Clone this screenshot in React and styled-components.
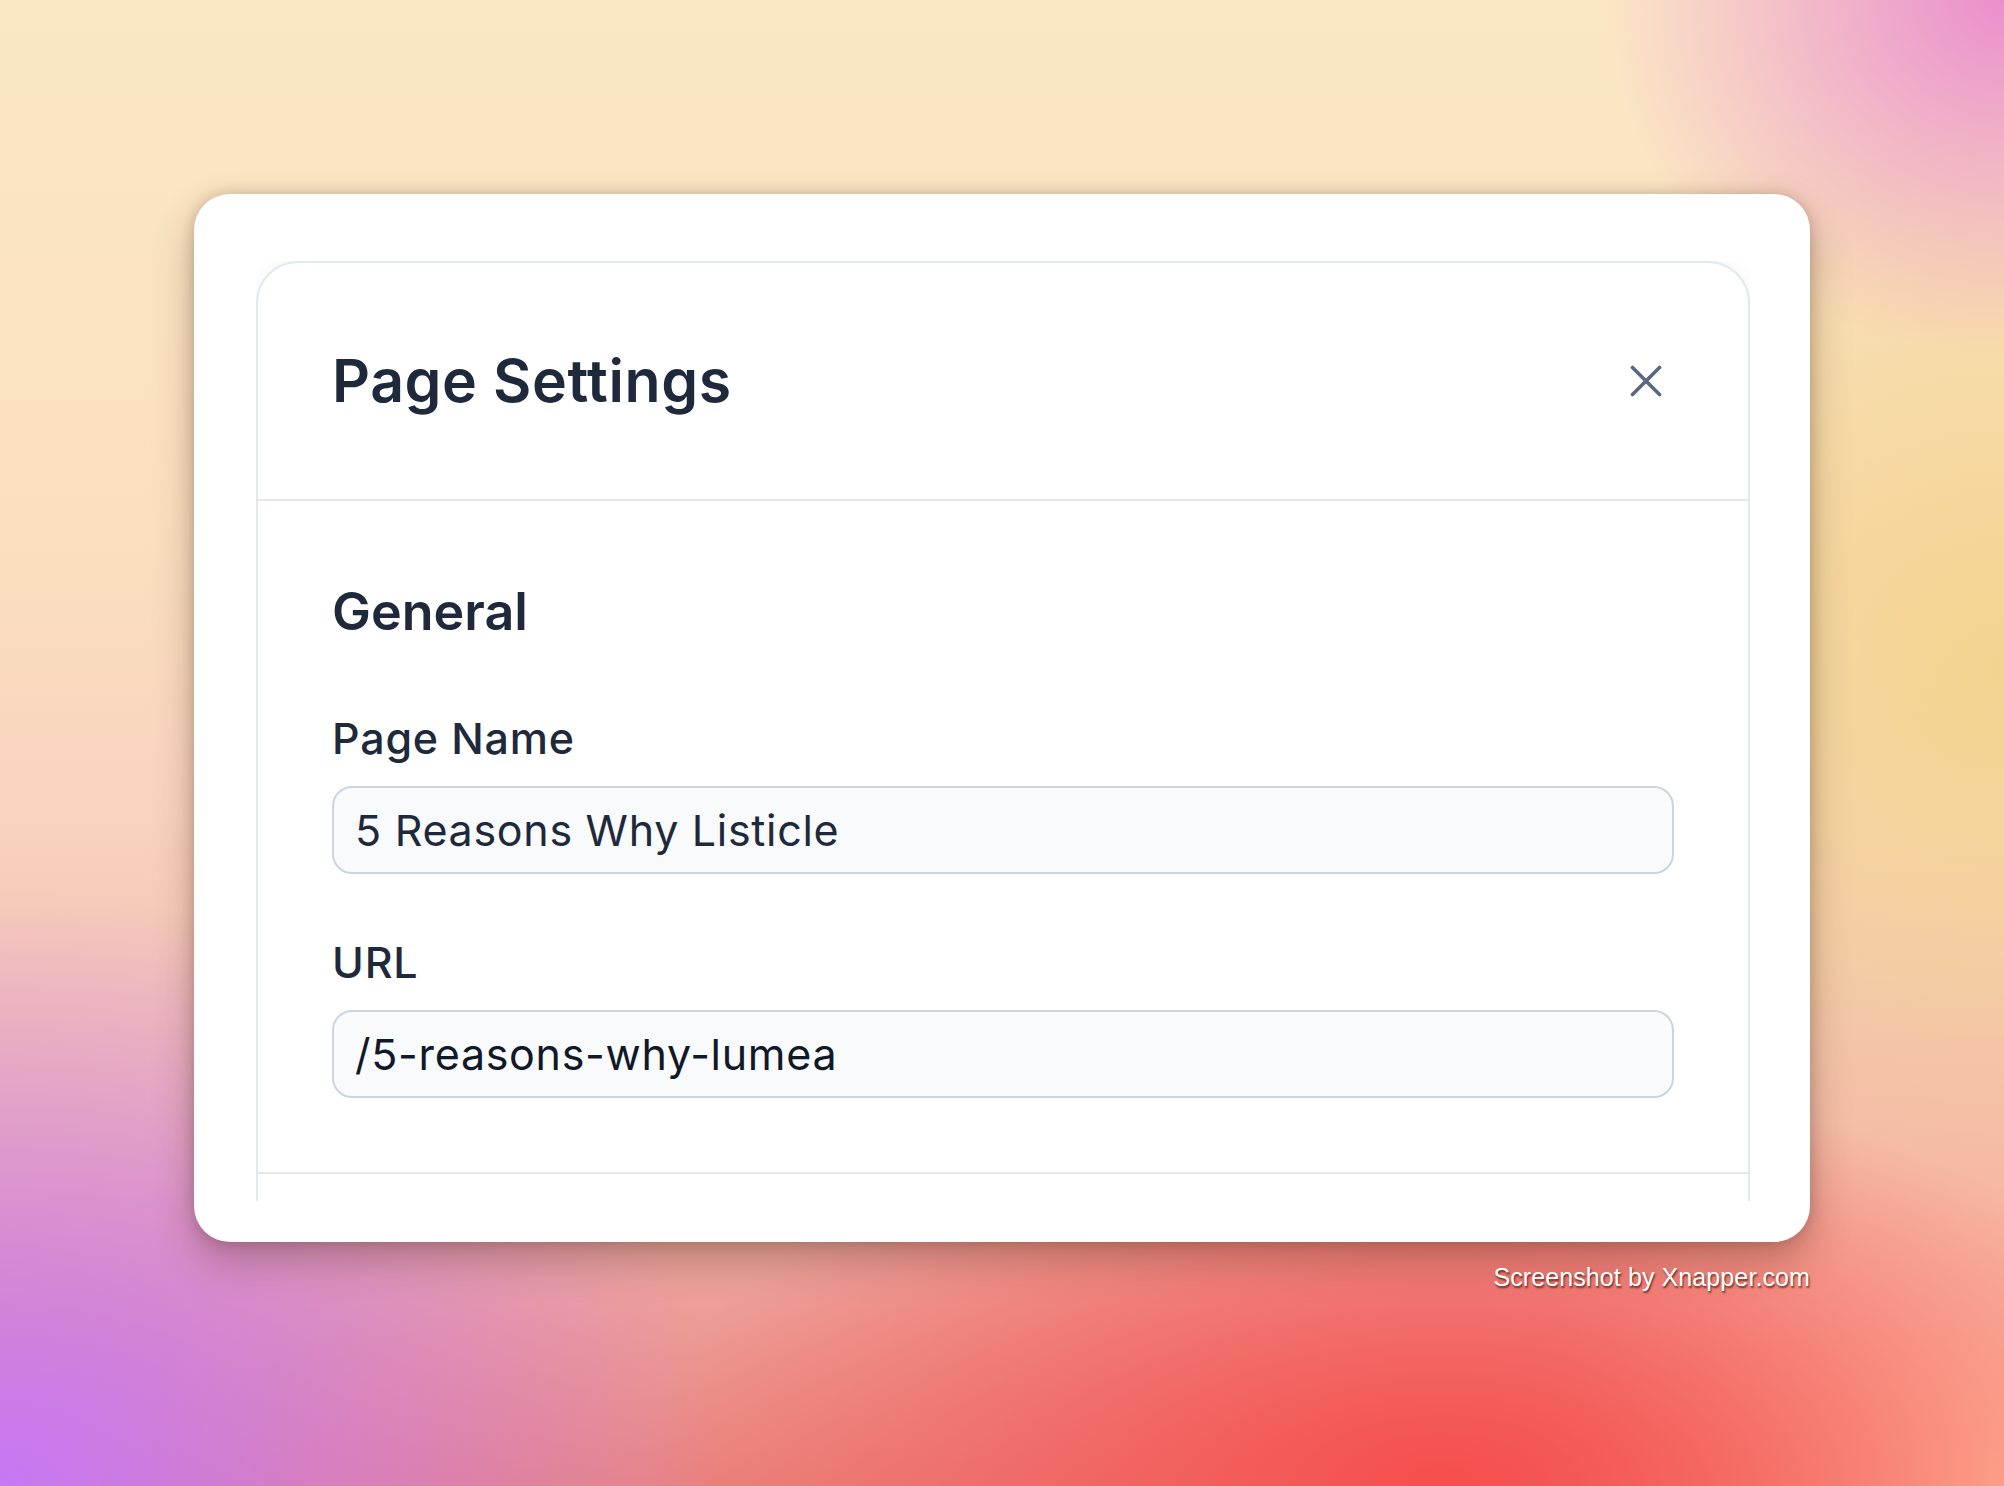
import React from "react";
import styled, { createGlobalStyle } from "styled-components";

const GlobalStyle = createGlobalStyle`
  html, body {
    margin: 0;
    padding: 0;
  }
  body {
    font-family: "Inter", "Noto Sans", sans-serif;
  }
  * {
    box-sizing: border-box;
  }
`;

function CloseIcon() {
  return (
    <svg width="32" height="32" viewBox="0 0 32 32" fill="none">
      <path
        d="M2.5 2.5L29.5 29.5M29.5 2.5L2.5 29.5"
        stroke="#5b6780"
        strokeWidth="3.6"
        strokeLinecap="round"
      />
    </svg>
  );
}

function App() {
  return (
    <>
      <GlobalStyle />
      <Page>
        <Stage>
          <Frame>
            <Viewport>
              <Panel>
                <Header>
                  <Title>Page Settings</Title>
                  <CloseBtn aria-label="Close">
                    <CloseIcon />
                  </CloseBtn>
                </Header>
                <Body>
                  <SectionTitle>General</SectionTitle>
                  <Field>
                    <Label>Page Name</Label>
                    <Input readOnly value="5 Reasons Why Listicle" />
                  </Field>
                  <Field>
                    <Label>URL</Label>
                    <Input readOnly value="/5-reasons-why-lumea" $dark />
                  </Field>
                </Body>
                <Footer />
              </Panel>
            </Viewport>
          </Frame>
          <Watermark>Screenshot by Xnapper.com</Watermark>
        </Stage>
      </Page>
    </>
  );
}

const Page = styled.div`
  width: 2004px;
  height: 1486px;
  overflow: hidden;
  display: flex;
  justify-content: center;
  padding-top: 194px;
  background:
    radial-gradient(ellipse 20% 24% at 100% 0%, rgba(233, 138, 205, 0.95), rgba(233, 138, 205, 0)),
    radial-gradient(ellipse 36% 40% at 0% 100%, rgba(198, 120, 246, 1), rgba(198, 120, 246, 0)),
    radial-gradient(ellipse 40% 28% at 72% 100%, rgba(246, 78, 76, 1), rgba(246, 78, 76, 0)),
    radial-gradient(ellipse 24% 34% at 100% 100%, rgba(255, 192, 162, 1), rgba(255, 192, 162, 0)),
    radial-gradient(ellipse 30% 40% at 100% 45%, rgba(243, 212, 142, 1), rgba(243, 212, 142, 0)),
    linear-gradient(180deg, #fbe7c5 0%, #fbe0c0 35%, #f9d3bf 55%, #f0b3ac 78%, #e9857f 100%);
`;

const Stage = styled.div`
  width: 1616px;
  display: flex;
  flex-direction: column;
  align-items: flex-end;
`;

const Frame = styled.div`
  width: 100%;
  height: 1048px;
  background: #ffffff;
  border-radius: 36px;
  padding: 67px 60px 41px 62px;
  box-shadow: 0 18px 40px rgba(60, 30, 10, 0.3), 0 0 14px rgba(60, 30, 10, 0.2);
`;

const Viewport = styled.div`
  height: 100%;
  overflow: hidden;
`;

const Panel = styled.section`
  border: 2px solid #e2e8f0;
  border-radius: 42px 42px 0 0;
  background: #ffffff;
  box-shadow: 0 0 18px rgba(15, 23, 42, 0.05);
  min-height: 1100px;
`;

const Header = styled.header`
  height: 238px;
  display: flex;
  align-items: center;
  justify-content: space-between;
  padding: 0 74px;
  border-bottom: 2px solid #e2e8f0;
`;

const Title = styled.h1`
  margin: 0;
  font-size: 59px;
  line-height: 1.2;
  font-weight: 600;
  color: #1e293b;
  letter-spacing: 0.6px;
`;

const CloseBtn = styled.button`
  width: 56px;
  height: 56px;
  display: flex;
  align-items: center;
  justify-content: center;
  padding: 0;
  border: none;
  background: transparent;
  cursor: pointer;
`;

const Body = styled.div`
  display: flex;
  flex-direction: column;
  padding: 80px 74px 74px;
  border-bottom: 2px solid #e2e8f0;
`;

const SectionTitle = styled.h2`
  margin: 0 0 70px;
  font-size: 52px;
  line-height: 1.2;
  font-weight: 600;
  color: #1e293b;
`;

const Field = styled.div`
  display: flex;
  flex-direction: column;
  gap: 21px;

  & + & {
    margin-top: 63px;
  }
`;

const Label = styled.label`
  font-size: 43px;
  line-height: 1.2;
  font-weight: 500;
  color: #1e293b;
  letter-spacing: 0.8px;
`;

const Input = styled.input`
  width: 100%;
  height: 88px;
  padding: 0 21px;
  border: 2px solid #cbd5e1;
  border-radius: 20px;
  background: #f8fafc;
  font-family: "Inter", "Noto Sans", sans-serif;
  font-size: 43px;
  letter-spacing: 0.7px;
  color: ${(p) => (p.$dark ? "#111827" : "#1e293b")};
  outline: none;
`;

const Footer = styled.div`
  height: 80px;
`;

const Watermark = styled.div`
  margin-top: 21px;
  font-family: "Liberation Sans", Arial, sans-serif;
  font-size: 25px;
  letter-spacing: 0.1px;
  color: #ffffff;
  text-shadow: 1px 2px 2px rgba(60, 20, 10, 0.75);
`;

export default App;
